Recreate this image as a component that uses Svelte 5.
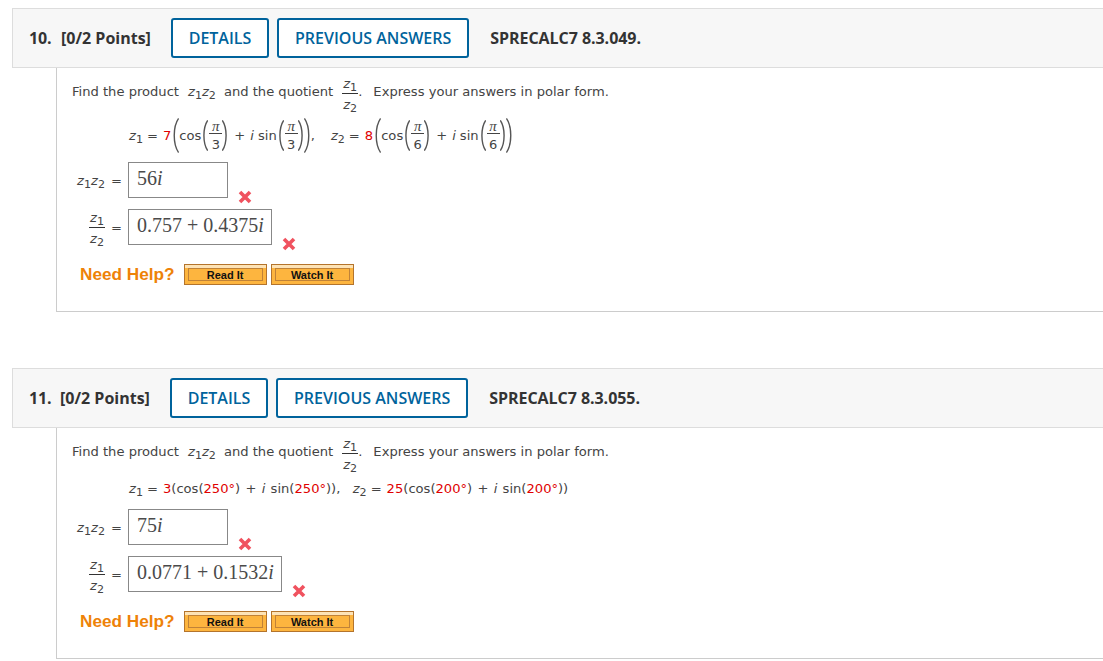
<script lang="ts">
	const questions = [
		{
			number: "10.",
			numberWidth: 32,
			code: "SPRECALC7 8.3.049.",
			product: "56",
			quotient: "0.757 + 0.4375",
			quotientWidth: 144,
			bodyHeight: 244,
			polar: false,
		},
		{
			number: "11.",
			numberWidth: 31,
			code: "SPRECALC7 8.3.055.",
			product: "75",
			quotient: "0.0771 + 0.1532",
			quotientWidth: 154,
			bodyHeight: 231,
			polar: true,
		},
	];
</script>

{#snippet sub(n)}<span class="zs"><span class="var">z</span><sub>{n}</sub></span>{/snippet}

{#snippet zfrac()}
	<span class="frac">
		<span class="num">{@render sub(1)}</span>
		<span class="den">{@render sub(2)}</span>
	</span>
{/snippet}

{#snippet paren(side, width, height, cls)}
	<svg class={`paren ${cls}`} width={width} height={height} viewBox="0 0 9 40" preserveAspectRatio="none" aria-hidden="true">
		{#if side === "l"}
			<path d="M8.5 0.5 C1 10 1 30 8.5 39.5" />
		{:else}
			<path d="M0.5 0.5 C8 10 8 30 0.5 39.5" />
		{/if}
	</svg>
{/snippet}

{#snippet piFrac(d)}
	{@render paren("l", 6, 31, "inner-l")}<span class="frac small"><span class="num pi">π</span><span class="den">{d}</span></span>{@render paren("r", 6, 31, "")}
{/snippet}

{#snippet cross()}
	<svg class="cross" width="14" height="14" viewBox="0 0 14 14" aria-hidden="true">
		<path d="M2 2 L12 12 M12 2 L2 12" />
	</svg>
{/snippet}

{#snippet term(coef, d)}
	<span class="red">{coef}</span>{@render paren("l", 7, 35, "outer-l")}<span>cos</span>{@render piFrac(d)}<span class="plus">+</span><span class="var">i</span><span class="sin">sin</span>{@render piFrac(d)}{@render paren("r", 7, 35, "")}
{/snippet}

<div class="page">
	{#each questions as q}
		<section class="question">
			<header class="head">
				<span class="number" style="width: {q.numberWidth}px">{q.number}</span>
				<span class="points">[0/2 Points]</span>
				<button type="button" class="tab details">DETAILS</button>
				<button type="button" class="tab">PREVIOUS ANSWERS</button>
				<span class="code">{q.code}</span>
			</header>

			<div class="body" style="height: {q.bodyHeight}px">
				<p class="prompt">
					<span>Find the product</span>
					<span class="inline">{@render sub(1)}{@render sub(2)}</span>
					<span>and the quotient</span>
					{@render zfrac()}
					<span class="dot">.</span>
					<span class="rest">Express your answers in polar form.</span>
				</p>

				{#if q.polar}
					<p class="given flat">
						{@render sub(1)}<span class="eq">=</span><span class="red">3</span>(cos(<span class="red">250°</span>) + <span class="var">i</span> sin(<span class="red">250°</span>)),
						<span class="gap2">{@render sub(2)}</span><span class="eq">=</span><span class="red">25</span>(cos(<span class="red">200°</span>) + <span class="var">i</span> sin(<span class="red">200°</span>))
					</p>
				{:else}
					<div class="given tall">
						{@render sub(1)}<span class="eq">=</span>{@render term("7", "3")}<span>,</span>
						<span class="gap2">{@render sub(2)}</span><span class="eq">=</span>{@render term("8", "6")}
					</div>
				{/if}

				<div class="answer first">
					<span class="label">{@render sub(1)}{@render sub(2)}<span class="eq">=</span></span>
					<span class="box product">{q.product}<em>i</em></span>
					{@render cross()}
				</div>
				<div class="answer">
					<span class="label">{@render zfrac()}<span class="eq">=</span></span>
					<span class="box" style="width: {q.quotientWidth}px">{q.quotient}<em>i</em></span>
					{@render cross()}
				</div>

				<div class="help">
					<span class="need">Need Help?</span>
					<button type="button" class="orange"><span>Read It</span></button>
					<button type="button" class="orange"><span>Watch It</span></button>
				</div>
			</div>
		</section>
	{/each}
</div>

<style>
	:global(body) {
		margin: 0;
		background: #fff;
		overflow: hidden;
	}

	.page {
		padding: 8px 0 0 12px;
		width: 1091px;
		height: 653px;
		overflow: hidden;
		font-family: "DejaVu Sans", Verdana, sans-serif;
		font-size: 13.1px;
		color: #444;
	}

	.question {
		margin-bottom: 56px;
	}

	.head {
		display: flex;
		align-items: center;
		box-sizing: border-box;
		height: 60px;
		padding-left: 16px;
		background: #f7f7f7;
		border: 1px solid #ddd;
		border-right: 0;
		font-family: "Open Sans", sans-serif;
		font-size: 16px;
		font-weight: 600;
		color: #333;
	}

	.number {
		font-weight: 700;
		letter-spacing: -0.2px;
	}

	.points {
		width: 110px;
		font-weight: 700;
		white-space: nowrap;
	}

	.tab {
		box-sizing: border-box;
		height: 40px;
		padding: 0 16px;
		margin-right: 8px;
		background: #fff;
		border: 2px solid #00639c;
		border-radius: 3px;
		font: inherit;
		color: #00639c;
	}

	.tab.details {
		width: 98px;
		padding: 0;
	}

	.code {
		margin-left: 13px;
		font-weight: 700;
		letter-spacing: -0.05px;
	}

	.body {
		box-sizing: border-box;
		margin-left: 44px;
		padding: 0 0 0 15px;
		border-left: 1px solid #ccc;
		border-bottom: 1px solid #ccc;
	}

	.prompt {
		display: flex;
		align-items: center;
		margin: 0;
		height: 46px;
		white-space: nowrap;
	}

	.inline {
		margin: 0 8px 0 9px;
	}

	.prompt > .frac {
		margin: 6px 0 0 9px;
	}

	.rest {
		margin-left: 11px;
	}

	.zs {
		white-space: nowrap;
	}

	.var {
		font-style: italic;
	}

	sub {
		font-size: 0.85em;
		line-height: 0;
		vertical-align: -0.3em;
	}

	.red {
		color: #e00000;
	}

	.frac {
		display: inline-flex;
		flex-direction: column;
		align-items: center;
		line-height: 1;
	}

	.frac .num {
		padding: 0 1px 3px;
		border-bottom: 1px solid #333;
	}

	.frac .den {
		padding-top: 4px;
	}

	.label .frac {
		margin-top: 2px;
	}

	.frac.small {
		font-size: 13px;
		width: 13px;
		margin-left: 1px;
	}

	.frac.small .num {
		box-sizing: border-box;
		width: 100%;
		height: 14px;
		padding: 0;
		line-height: 13px;
		text-align: center;
		border-bottom-color: #444;
	}

	.pi {
		font-family: "Liberation Serif", serif;
		font-size: 15px;
		font-style: italic;
	}

	.given {
		margin: 0;
	}

	.given.tall {
		display: flex;
		align-items: center;
		height: 44px;
		margin: -1px 0 0 57px;
		white-space: nowrap;
	}

	.given.flat {
		height: 36px;
		line-height: 36px;
		margin: -3px 0 -3px 57px;
		word-spacing: 1.1px;
		white-space: pre-wrap;
	}

	.eq {
		margin: 0 5px 0 4px;
	}

	.gap2 {
		margin-left: 7px;
	}

	.tall .gap2 {
		margin-left: 16px;
	}

	.plus {
		margin: 0 5px 0 6px;
	}

	.sin {
		margin-left: 4px;
	}

	.paren {
		flex: none;
	}

	.paren.outer-l,
	.paren.inner-l {
		margin-left: 1px;
	}

	.paren path {
		fill: none;
		stroke: #555;
		stroke-width: 1.4;
		vector-effect: non-scaling-stroke;
	}

	.answer {
		display: flex;
		align-items: center;
		height: 36px;
		margin: 0 0 11px;
	}

	.answer.first {
		margin-top: 5px;
	}

	.label {
		display: flex;
		align-items: center;
		justify-content: flex-end;
		box-sizing: border-box;
		width: 56px;
		white-space: nowrap;
	}

	.label .eq {
		margin: 0 6px;
	}

	.box {
		box-sizing: border-box;
		height: 36px;
		padding: 0 0 4px 8px;
		display: flex;
		align-items: center;
		background: #fff;
		border: 1px solid #888;
		font-family: "Liberation Serif", serif;
		font-size: 20px;
		color: #4a4a4a;
		white-space: pre;
	}

	.box.product {
		width: 100px;
	}

	.cross {
		align-self: flex-end;
		margin: 0 0 -6px 10px;
	}

	.cross path {
		fill: none;
		stroke: #f0525f;
		stroke-width: 3.6;
	}

	.help {
		display: flex;
		align-items: center;
		margin: 19px 0 0 8px;
	}

	.need {
		font-family: "Liberation Sans", Arial, sans-serif;
		font-size: 17.2px;
		font-weight: 700;
		color: #ee8208;
		margin-right: 9px;
	}

	.orange {
		box-sizing: border-box;
		width: 83px;
		height: 21px;
		padding: 3px;
		margin-right: 4px;
		background: linear-gradient(#fde3b6 0 3px, #fdb53f 3px);
		border: 1px solid #b4742c;
		font-family: "Liberation Sans", Arial, sans-serif;
		font-size: 11px;
		font-weight: 700;
		color: #111;
	}

	.orange span {
		display: block;
		height: 100%;
		line-height: 13px;
		border: 1px solid #c08238;
		box-sizing: border-box;
	}
</style>
